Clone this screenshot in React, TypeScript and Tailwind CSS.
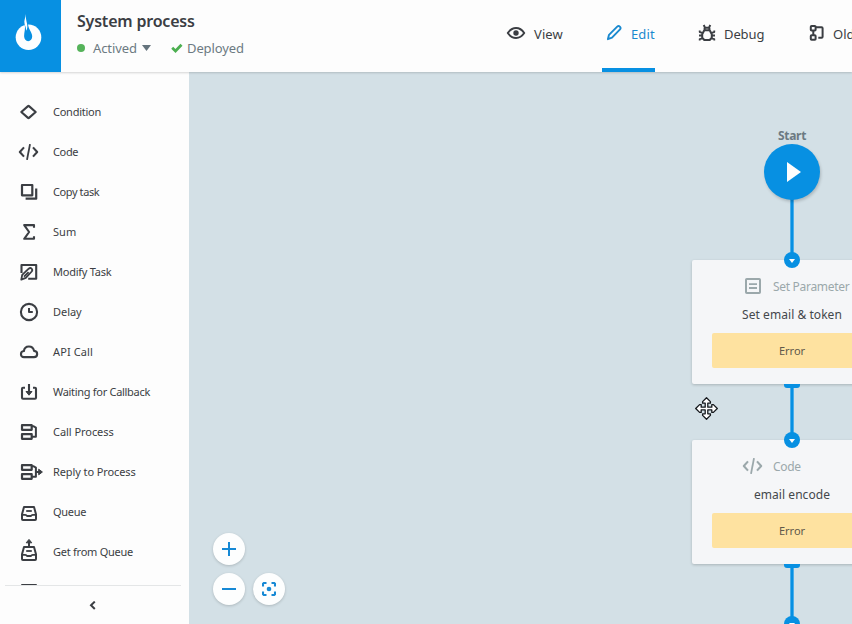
import React from 'react';
import type { ReactNode } from 'react';

function Icon({ children, className = '' }: { children: ReactNode; className?: string }) {
  return (
    <svg
      width="28"
      height="28"
      viewBox="0 0 28 28"
      fill="none"
      stroke="currentColor"
      strokeWidth="2"
      strokeLinejoin="round"
      className={`shrink-0 overflow-visible ${className}`}
    >
      {children}
    </svg>
  );
}

const codePaths = (
  <>
    <path d="M9 9.4L4.8 14 9 18.6M18 9.4l4.2 4.6-4.2 4.6" strokeWidth="2.1" />
    <path d="M15 6.2l-3 15.6" strokeWidth="1.8" />
  </>
);

const trayPaths = (
  <>
    <path d="M9 9h10l2 7.2v4.9q0 .9-.9.9H7.9q-.9 0-.9-.9v-4.9z" />
    <path d="M7 16.8h3.2q1.3 0 1.8 1.2h4q.5-1.2 1.8-1.2H21" strokeWidth="1.8" />
    <path d="M11.2 13h5.6" strokeWidth="1.8" />
  </>
);

const processPaths = (
  <>
    <path d="M7 7.2h9.7v4.6H7zM7 16.2h9.7v4.6H7z" strokeWidth="2.2" />
    <path d="M16.7 8.2h1.6l2.6 1.4v9.2h-4.2" strokeWidth="2" />
  </>
);

const items: { label: string; tracking: string; icon: ReactNode }[] = [
  {
    label: 'Condition',
    tracking: 'tracking-[-0.25px]',
    icon: <path d="M13 8.1q.5-.4 1 0L20.7 14 14 19.9q-.5.4-1 0L6.3 14z" strokeWidth="2.1" />,
  },
  { label: 'Code', tracking: 'tracking-[-0.35px]', icon: codePaths },
  {
    label: 'Copy task',
    tracking: 'tracking-[-0.4px]',
    icon: <path d="M7 7h10.3v10.3H7zM21.2 10.5v10.2H10.6" strokeWidth="2.2" />,
  },
  {
    label: 'Sum',
    tracking: 'tracking-[0.05px]',
    icon: <path d="M19 9.7V7.1H9.2l4.9 6.9-4.9 6.8H19v-2.6" strokeWidth="2.1" />,
  },
  {
    label: 'Modify Task',
    tracking: 'tracking-[-0.25px]',
    icon: (
      <>
        <path d="M6.5 15V7H21.2v13.8h-8" strokeWidth="2.1" />
        <path d="M6.3 21.6l.9-4.7 6.5-6.2c2.1-1.8 4.6.5 3 2.8l-5.9 6.4zM9 18.7l4.6-4.5" strokeWidth="1.8" />
      </>
    ),
  },
  {
    label: 'Delay',
    tracking: 'tracking-[-0.05px]',
    icon: (
      <>
        <circle cx="14" cy="14" r="8.1" strokeWidth="2.1" />
        <path d="M14 10v4.1h3.8" />
      </>
    ),
  },
  {
    label: 'API Call',
    tracking: 'tracking-[0.1px]',
    icon: <path d="M9 19.1c-4.1 0-4-5.8-.1-6.1.8-5.8 8.9-6 10.2-.1 4.2.3 4 6.2-.1 6.2z" strokeWidth="2.1" />,
  },
  {
    label: 'Waiting for Callback',
    tracking: 'tracking-[-0.3px]',
    icon: (
      <>
        <path d="M10 9.7H8q-1 0-1 1v9q0 1.1 1 1.1h12q1 0 1-1.1v-9q0-1-1-1h-2M14 6v9" strokeWidth="2.1" />
        <path d="M11 13.5h6l-3 3.7z" fill="currentColor" strokeWidth="1" />
      </>
    ),
  },
  { label: 'Call Process', tracking: 'tracking-[-0.05px]', icon: processPaths },
  {
    label: 'Reply to Process',
    tracking: 'tracking-[-0.1px]',
    icon: (
      <>
        {processPaths}
        <path d="M21 14h4" />
        <path d="M23.7 11.2l3.7 2.8-3.7 2.8z" fill="currentColor" strokeWidth="1" />
      </>
    ),
  },
  { label: 'Queue', tracking: 'tracking-[-0.3px]', icon: trayPaths },
  {
    label: 'Get from Queue',
    tracking: 'tracking-[-0.25px]',
    icon: (
      <>
        {trayPaths}
        <path d="M14 9V3" />
        <path d="M11.2 4.8h5.6L14 1.4z" fill="currentColor" strokeWidth="1" />
      </>
    ),
  },
  { label: '', tracking: '', icon: <path d="M7 7h14v14H7z" /> },
];

function Logo() {
  return (
    <div className="flex h-[72px] w-[61px] shrink-0 bg-[#0790e2]">
      <svg width="61" height="72" viewBox="0 0 61 72">
        <circle cx="28.5" cy="37.3" r="12.8" fill="#fdfeff" />
        <path
          d="M24.6 24c1.2 4.5-.6 8.5-.5 12.3.1 3 1.9 4.9 4.1 4.9s4.1-1.9 4-4.9c-.1-4.3-3.7-6.4-4.2-12.3z"
          fill="#0790e2"
        />
        <path d="M25.9 14c-.5 4-2.2 6.5-1.3 10.2.4 1.5 1.4 2.4 1.6 6.6 1.5-2.6 1.3-4.7.8-7.4-.7-3.2-1.4-5.4-1.1-9.4z" fill="#fdfeff" />
      </svg>
    </div>
  );
}

function Header() {
  return (
    <header className="relative z-10 flex h-[72px] w-full bg-[#fdfdfd] text-[#3b3e43] shadow-[0_1px_2px_rgba(0,0,0,0.16)]">
      <Logo />
      <div className="flex w-[421px] shrink-0 flex-col pl-4 pt-[9px]">
        <h1 className="h-6 text-[16px] leading-6 font-semibold tracking-[-0.2px] whitespace-nowrap">System process</h1>
        <div className="mt-[5px] flex h-5 items-center text-[13px] leading-5 text-[#6c7a82]">
          <span className="h-2 w-2 rounded-full bg-[#55b35a]" />
          <span className="ml-2 w-[43px] tracking-[-0.1px] whitespace-nowrap">Actived</span>
          <svg width="9" height="6" viewBox="0 0 9 6" className="ml-[6px]">
            <path d="M0 0h9L4.5 6z" fill="#65747d" />
          </svg>
          <svg width="12" height="10" viewBox="0 0 12 10" className="ml-5 overflow-visible">
            <path d="M1.2 4.7l3.3 3.2 6-6.2" fill="none" stroke="#4caf50" strokeWidth="2.8" />
          </svg>
          <span className="ml-1 tracking-[-0.1px] whitespace-nowrap">Deployed</span>
        </div>
      </div>
      <nav className="flex min-w-0 flex-1 overflow-hidden text-[13px] leading-5">
        <div className="flex h-[68px] w-[120px] shrink-0 items-center pl-5">
          <Icon className="mt-[-2px]">
            <path d="M5.8 14c4.5-6.6 12-6.6 16.4 0-4.4 6.6-11.9 6.6-16.4 0z" />
            <circle cx="14" cy="14" r="2.7" fill="currentColor" stroke="none" />
          </Icon>
          <span className="ml-1 tracking-[0.1px]">View</span>
        </div>
        <div className="flex w-[53px] shrink-0 items-center border-b-4 border-[#0790e2] text-[#1a89cf]">
          <Icon className="ml-[-2px] mt-[-2px]">
            <path d="M7.9 20.2l1.1-4.4 8.2-8.2c1.8-1.7 4.4.8 2.8 2.7l-8 8.4z" strokeWidth="1.9" />
          </Icon>
          <span className="ml-[3px] tracking-[0.1px]">Edit</span>
        </div>
        <div className="flex h-[68px] shrink-0 items-center pl-[38px]">
          <Icon className="mt-[-2px]">
            <path d="M11.3 11.3h5.4l2.1 4v3.3L16.7 21h-5.4l-2.1-2.4v-3.3zM11.6 11V8.8h4.8V11M10.7 6l1.3 2.6M17.3 6L16 8.6" strokeWidth="2" />
            <path d="M6.7 11.6v1.5l3 .7M21.3 11.6v1.5l-3 .7M6 16.5h3M22 16.5h-3M6.7 21.6v-1.5l3-.7M21.3 21.6v-1.5l-3-.7" strokeWidth="1.8" />
          </Icon>
          <span className="ml-[3px] w-[41px] tracking-[-0.1px]">Debug</span>
        </div>
        <div className="flex h-[68px] shrink-0 items-center pl-[38px]">
          <Icon className="mt-[-2px]">
            <rect x="7.8" y="7" width="4.8" height="4.6" rx=".8" />
            <rect x="7.8" y="16.2" width="4.8" height="4.6" rx=".8" />
            <path d="M12.6 8.2h6q1 0 1 1v8.6q0 1-1 1h-3.3M10.3 11.4v5" />
          </Icon>
          <span className="ml-[2px] whitespace-nowrap">Old</span>
        </div>
      </nav>
    </header>
  );
}

function Sidebar() {
  return (
    <aside className="flex w-[189px] shrink-0 flex-col bg-[#fdfdfd] text-[#3b3e43]">
      <ul className="h-[513px] overflow-hidden pt-5">
        {items.map((item, i) => (
          <li key={i} className="flex h-10 items-center pl-[15px]">
            <Icon>{item.icon}</Icon>
            <span className={`ml-[10px] text-[11px] leading-4 whitespace-nowrap ${item.tracking}`}>{item.label}</span>
          </li>
        ))}
      </ul>
      <div className="ml-[5px] flex h-[39px] w-[176px] justify-center border-t border-[#e4e6e7] pt-[15px]">
        <svg width="8" height="9" viewBox="0 0 8 9" fill="none" stroke="currentColor" strokeWidth="2">
          <path d="M5.8 .6L2 4.3 5.8 8" />
        </svg>
      </div>
    </aside>
  );
}

function Port({ className }: { className: string }) {
  return (
    <div className={`absolute left-[595px] flex h-4 w-4 items-center justify-center rounded-full bg-[#0790e2] ${className}`}>
      <svg width="6" height="4" viewBox="0 0 6 4" className="mt-px">
        <path d="M0 0h6L3 4z" fill="#fdfdfd" />
      </svg>
    </div>
  );
}

function Link({ className }: { className: string }) {
  return (
    <div className={`absolute left-[595px] flex w-4 flex-col items-center ${className}`}>
      <div className="h-full w-1 border-x border-[#4aaeea] bg-[#0790e2]" />
    </div>
  );
}

function NodeCard({
  top,
  icon,
  kind,
  title,
}: {
  top: string;
  icon: ReactNode;
  kind: string;
  title: string;
}) {
  return (
    <div
      className={`absolute left-[503px] ${top} flex h-[124px] w-[200px] flex-col rounded-[2px] bg-[#f5f6f8] px-5 pt-3 shadow-[0_1px_3px_rgba(0,0,0,0.2)]`}
    >
      <div className="flex h-7 items-center pl-[27px] text-[#9ba8ab]">
        <Icon>{icon}</Icon>
        <span className="ml-[6px] pt-0.5 text-[12px] leading-5 tracking-[-0.3px] whitespace-nowrap">{kind}</span>
      </div>
      <div className="mt-[5px] h-5 text-center text-[12px] leading-5 tracking-[0.05px] whitespace-nowrap text-[#44484c]">
        {title}
      </div>
      <div className="mt-2 flex h-[35px] items-center justify-center rounded-[2px] bg-[#fee2a0] pt-0.5 text-[11px] text-[#60584a]">
        Error
      </div>
    </div>
  );
}

function Canvas() {
  return (
    <main className="relative min-w-0 flex-1 overflow-hidden bg-[#d3e0e6]">
      <div className="absolute top-[56px] left-[573px] w-[60px] text-center text-[12px] leading-4 font-bold tracking-[-0.3px] text-[#6c7a82]">
        Start
      </div>
      <Link className="top-[126px] h-[60px]" />
      <div className="absolute top-[72px] left-[575px] flex h-14 w-14 items-center justify-center rounded-full bg-[#0790e2] shadow-[1px_2px_3px_rgba(0,0,0,0.18)]">
        <svg width="14" height="20" viewBox="0 0 14 20" className="ml-[3px]">
          <path d="M0 0l14 10L0 20z" fill="#fdfdfd" />
        </svg>
      </div>
      <NodeCard
        top="top-[188px]"
        icon={
          <>
            <rect x="7" y="7" width="14" height="14" rx=".8" />
            <path d="M10 12.2h8M10 16h8" strokeWidth="1.8" />
          </>
        }
        kind="Set Parameter"
        title="Set email & token"
      />
      <Port className="top-[180px]" />
      <div className="absolute top-[312px] left-[595px] h-1 w-4 rounded-b-[3px] bg-[#0790e2]" />
      <Link className="top-[316px] h-[46px]" />
      <NodeCard top="top-[368px]" icon={codePaths} kind="Code" title="email encode" />
      <Port className="top-[360px]" />
      <div className="absolute top-[492px] left-[595px] h-1 w-4 rounded-b-[3px] bg-[#0790e2]" />
      <Link className="top-[496px] h-[50px]" />
      <Port className="top-[544px]" />

      <svg
        className="absolute top-[325px] left-[506px]"
        width="23"
        height="23"
        viewBox="0 0 23 23"
        fill="#fff"
        stroke="#15191d"
        strokeWidth="1.3"
        strokeLinejoin="round"
      >
        <path d="M11.5.7l3.9 3.9v1.6h-2.6v4h4V7.6h1.6l3.9 3.9-3.9 3.9h-1.6v-2.6h-4v4h2.6v1.6l-3.9 3.9-3.9-3.9v-1.6h2.6v-4h-4v2.6H4.6L.7 11.5l3.9-3.9h1.6v2.6h4v-4H7.6V4.6z" />
      </svg>

      <div className="absolute top-[461px] left-6 grid grid-cols-2 gap-2 text-[#1689d5]">
        <button className="flex h-8 w-8 items-center justify-center rounded-full bg-[#fdfefe] shadow-[0_1px_3px_rgba(0,0,0,0.18)]">
          <svg width="14" height="14" viewBox="0 0 14 14" stroke="currentColor" strokeWidth="2">
            <path d="M7 0v14M0 7h14" />
          </svg>
        </button>
        <span />
        <button className="flex h-8 w-8 items-center justify-center rounded-full bg-[#fdfefe] shadow-[0_1px_3px_rgba(0,0,0,0.18)]">
          <svg width="14" height="14" viewBox="0 0 14 14" stroke="currentColor" strokeWidth="2">
            <path d="M0 7h14" />
          </svg>
        </button>
        <button className="flex h-8 w-8 items-center justify-center rounded-full bg-[#fdfefe] shadow-[0_1px_3px_rgba(0,0,0,0.18)]">
          <svg width="14" height="14" viewBox="0 0 14 14" fill="none" stroke="currentColor" strokeWidth="2.1">
            <path d="M1 4.5V1.8L1.8 1h2.7M9.5 1h2.7l.8.8v2.7M13 9.5v2.7l-.8.8H9.5M4.5 13H1.8l-.8-.8V9.5" />
            <circle cx="7" cy="7" r="2.3" fill="currentColor" stroke="none" />
          </svg>
        </button>
      </div>
    </main>
  );
}

export default function App() {
  return (
    <div className="flex h-[624px] w-[852px] flex-col overflow-hidden bg-[#fdfdfd] font-['Noto_Sans','Open_Sans',sans-serif]">
      <Header />
      <div className="flex min-h-0 flex-1">
        <Sidebar />
        <Canvas />
      </div>
    </div>
  );
}
